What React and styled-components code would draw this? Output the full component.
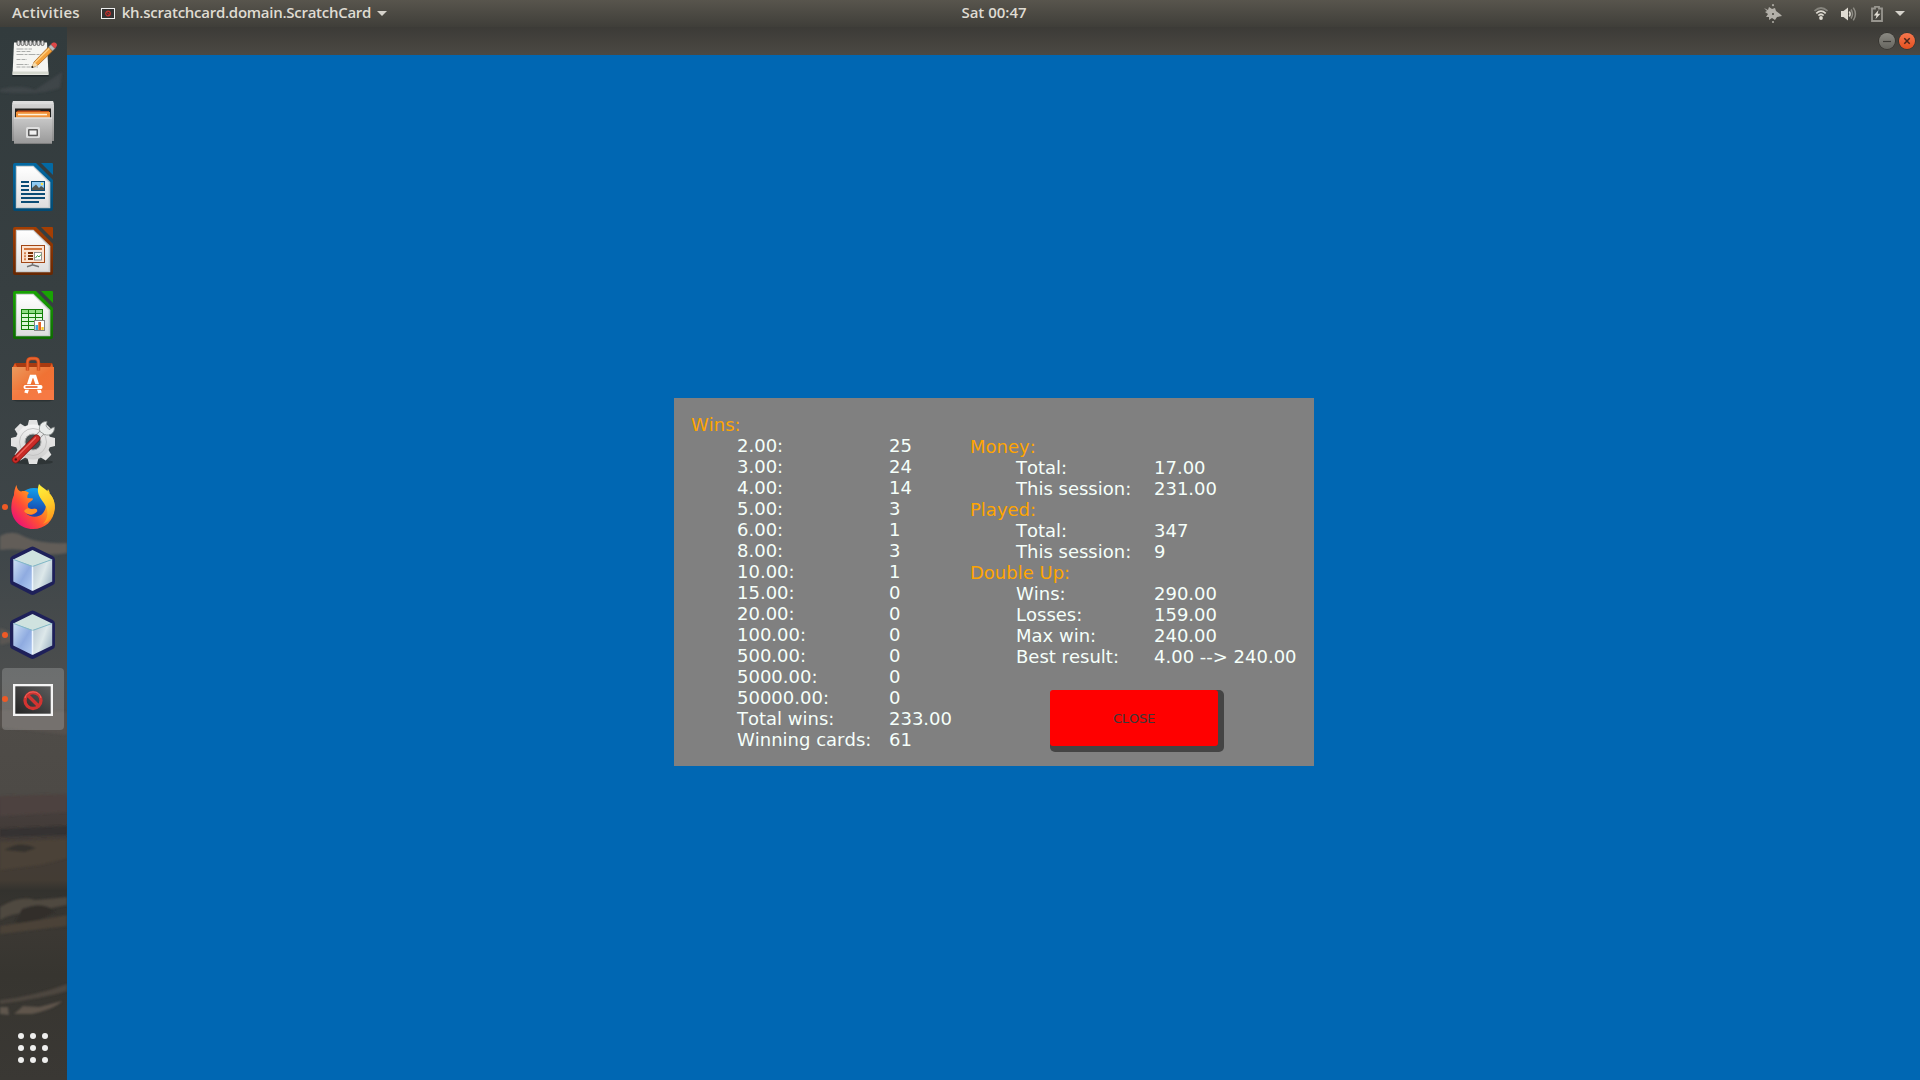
import React from "react";
import styled, { createGlobalStyle, css } from "styled-components";

const GlobalStyle = createGlobalStyle`
  * { box-sizing: border-box; }
  body { margin: 0; overflow: hidden; background: #0067b3; }
`;

const Desktop = styled.div`
  width: 1920px;
  height: 1080px;
  display: flex;
  flex-direction: column;
  font-family: "DejaVu Sans", sans-serif;
`;

/* ---------- top bar ---------- */

const TopBar = styled.header`
  height: 27px;
  flex: none;
  display: grid;
  grid-template-columns: 1fr auto 1fr;
  align-items: center;
  background: linear-gradient(#58554d, #3f3e39);
  color: #dfdbd2;
  font: 600 15px/25px "Open Sans", "Noto Sans", sans-serif;
`;

const BarStart = styled.div`
  display: flex;
  align-items: center;
  padding-left: 12px;
`;

const BarText = styled.span`
  white-space: nowrap;
  padding-bottom: 2px;
  letter-spacing: ${(p) => p.$spacing || "0"};
  margin-left: ${(p) => p.$left || "0"};
`;

const AppIcon = styled.svg`
  margin-left: ${(p) => p.$left || "0"};
  display: block;
`;

const Caret = styled.i`
  border: 5px solid transparent;
  border-top-color: #d6d3cc;
  border-bottom: 0;
  margin-left: ${(p) => p.$left};
`;

const BarEnd = styled.div`
  display: flex;
  align-items: center;
  justify-content: flex-end;
  padding-right: 15px;
`;

/* ---------- body ---------- */

const Body = styled.div`
  flex: 1;
  min-height: 0;
  display: flex;
`;

const Dock = styled.nav`
  position: relative;
  width: 67px;
  flex: none;
  display: flex;
  flex-direction: column;
  justify-content: space-between;
  padding: 1px 3px 13px 2px;
  background: #373e40;
`;

const Wallpaper = styled.svg`
  position: absolute;
  inset: 0;
`;

const DockItems = styled.div`
  position: relative;
  display: flex;
  flex-direction: column;
  gap: 2px;
`;

const DockItem = styled.div`
  position: relative;
  width: 62px;
  height: 62px;
  display: flex;
  align-items: center;
  justify-content: center;
  border-radius: 4px;
  background: ${(p) => (p.$active ? "rgba(255,255,255,0.19)" : "none")};
  ${(p) =>
    p.$running &&
    css`
      &::before {
        content: "";
        position: absolute;
        left: 0;
        top: 28px;
        width: 6px;
        height: 6px;
        border-radius: 50%;
        background: #ee5a26;
      }
    `}
`;

const AppGrid = styled.div`
  position: relative;
  align-self: center;
  display: grid;
  grid-template-columns: repeat(3, 6px);
  gap: 6px;
  margin-bottom: 4px;
`;

const GridDot = styled.span`
  width: 6px;
  height: 6px;
  border-radius: 50%;
  background: #efefee;
`;

const Window = styled.section`
  flex: 1;
  display: flex;
  flex-direction: column;
`;

const TitleBar = styled.div`
  height: 28px;
  flex: none;
  display: flex;
  justify-content: flex-end;
  align-items: center;
  gap: 4px;
  padding-right: 5px;
  background: linear-gradient(#3c3b37, #4b4943);
`;

const WindowButton = styled.span`
  width: 16px;
  height: 16px;
  border-radius: 50%;
  display: flex;
  align-items: center;
  justify-content: center;
  box-shadow: 0 0 0 0.6px #2d2c28;
  background: ${(p) =>
    p.$close ? "linear-gradient(#f6774e, #e4501f)" : "linear-gradient(#8b8a83, #66655f)"};
`;

const Canvas = styled.main`
  flex: 1;
  display: flex;
  align-items: flex-start;
  justify-content: center;
  padding-top: 343px;
  background: #0067b3;
`;

/* ---------- statistics dialog ---------- */

const Panel = styled.div`
  width: 640px;
  height: 368px;
  display: flex;
  padding: 16px 0 0 17px;
  margin-left: 1px;
  background: #808080;
  color: #f5fffa;
  font: 18px/21px "DejaVu Sans", sans-serif;
  font-kerning: none;
`;

const WinsColumn = styled.div`
  width: 279px;
`;

const DetailsColumn = styled.div`
  padding-top: 22px;
  display: flex;
  flex-direction: column;
`;

const Heading = styled.div`
  color: #ffa500;
`;

const Row = styled.div`
  display: grid;
  grid-template-columns: ${(p) => p.$label}px auto;
  padding-left: 46px;
  white-space: nowrap;
`;

const ButtonBase = styled.div`
  width: 174px;
  height: 62px;
  margin: 23px 0 0 80px;
  padding: 0 6px 6px 0;
  border-radius: 5px;
  background: #444;
`;

const CloseButton = styled.button`
  width: 168px;
  height: 56px;
  display: block;
  padding: 1px 0 0;
  border: 0;
  border-radius: 3px;
  background: #ff0000;
  color: #3a3a3a;
  font: 13px/16px "DejaVu Sans", sans-serif;
  font-kerning: none;
  letter-spacing: -0.2px;
`;

const wins = [
  ["2.00:", "25"], ["3.00:", "24"], ["4.00:", "14"], ["5.00:", "3"], ["6.00:", "1"],
  ["8.00:", "3"], ["10.00:", "1"], ["15.00:", "0"], ["20.00:", "0"], ["100.00:", "0"],
  ["500.00:", "0"], ["5000.00:", "0"], ["50000.00:", "0"], ["Total wins:", "233.00"],
  ["Winning cards:", "61"],
];

const details = [
  { title: "Money:", rows: [["Total:", "17.00"], ["This session:", "231.00"]] },
  { title: "Played:", rows: [["Total:", "347"], ["This session:", "9"]] },
  {
    title: "Double Up:",
    rows: [["Wins:", "290.00"], ["Losses:", "159.00"], ["Max win:", "240.00"], ["Best result:", "4.00 --> 240.00"]],
  },
];

/* ---------- icons ---------- */

const Icon = ({ children }) => (
  <svg width="48" height="48" viewBox="0 0 48 48" overflow="visible">{children}</svg>
);

const NotesIcon = () => (
  <Icon>
    <path d="M3 41.500L40 41.500L39 39H4Z" fill="#20272a" />
    <path d="M5 7.500H38L39.500 40H3.500Z" fill="#f5f5f2" />
    <path d="M3.700 36.500H39.300L39.500 39.500H3.500Z" fill="#d5d8cf" />
    {[0, 1, 2, 3, 4, 5, 6].map((i) => (
      <rect key={i} x={8 + i * 4} y="5.500" width="3" height="5" rx="1.400" fill="#ddd" stroke="#555" strokeWidth="0.900" />
    ))}
    {[14, 16.500, 19.500, 24.500, 29.500, 32].map((y, i) => (
      <path key={y} d={`M7.500 ${y}H${[23, 22, 32, 18, 20, 29][i]}`} stroke="#a3a5a3" strokeWidth="0.900" strokeDasharray={i % 2 ? "4 1" : "7 1 3 1"} />
    ))}
    <path d="M23 32.500L25 27L39.500 12L43.500 16L29 30Z" fill="#f5a13a" stroke="#9c5a17" strokeWidth="0.700" />
    <path d="M26 27.500L40.500 13.200" stroke="#ffcf80" strokeWidth="1.300" />
    <path d="M25 27L28.800 30.200L22.700 32.700Z" fill="#f5dcae" />
    <circle cx="23.400" cy="32" r="1" fill="#222" />
    <path d="M39.500 12L42 9.500L46 13.500L43.500 16Z" fill="#b9bcbc" stroke="#777" strokeWidth="0.500" />
    <path d="M42 9.500C43.500 6 49 7.500 47.800 11L46 13.500Z" fill="#dd4747" />
  </Icon>
);

const FilesIcon = () => (
  <Icon>
    <defs>
      <linearGradient id="cab" x2="0" y2="1"><stop stopColor="#c8c8c8" /><stop offset="1" stopColor="#989898" /></linearGradient>
      <linearGradient id="cabBack" x2="0" y2="1"><stop stopColor="#d9d9d9" /><stop offset="1" stopColor="#8b8b8b" /></linearGradient>
    </defs>
    <path d="M4 2H44L45 6V42H3V6Z" fill="url(#cabBack)" />
    <path d="M4 2H44L44.700 5H3.300Z" fill="#ddd" />
    <rect x="6" y="9.500" width="36" height="11" fill="#22211f" />
    <path d="M7 13L9 11.500H31L32 12H40V19H7Z" fill="#c4501a" />
    <rect x="7" y="13" width="34" height="7" fill="#f09139" />
    <rect x="9" y="14.800" width="29" height="1.500" fill="#fff0d8" />
    <rect x="5" y="18.500" width="38" height="26.500" fill="url(#cab)" />
    <path d="M5 19H43" stroke="#ededed" strokeWidth="1" />
    <path d="M5 44.500H43" stroke="#7d7d7d" strokeWidth="1" />
    <rect x="17" y="28" width="14" height="11" rx="1.500" fill="#dedede" />
    <rect x="19" y="30" width="10" height="7.200" rx="1" fill="#5c5c5c" />
    <rect x="20.500" y="31.500" width="7" height="4.200" fill="#f1f1f1" />
  </Icon>
);

const OfficePage = ({ id, top, bottom, children }) => (
  <Icon>
    <defs>
      <linearGradient id={id} x2="0" y2="1"><stop stopColor={top} /><stop offset="1" stopColor={bottom} /></linearGradient>
      <linearGradient id={id + "p"} x2="0" y2="1"><stop stopColor="#fff" /><stop offset="1" stopColor="#dedede" /></linearGradient>
    </defs>
    <path d="M6 0H27L44 17V46Q44 48 42 48H6Q4 48 4 46V2Q4 0 6 0Z" fill={`url(#${id})`} />
    <path d="M32 0H43Q44 0 44 1V12Z" fill={top} />
    <path d="M6.800 2.700H24.500L41.300 19V45.300H6.800Z" fill="#c9cdcf" />
    <path d="M8 3.700H24L39.600 19.500V44H8Z" fill={`url(#${id}p)`} />
    {children}
  </Icon>
);

const WriterIcon = () => (
  <OfficePage id="wr" top="#0369a3" bottom="#024a73">
    <path d="M12 19H20M12 23H20M12 27H20M12 31H36M12 35H36M12 39H30" stroke="#0a4c75" strokeWidth="2" />
    <rect x="22.500" y="18.500" width="13" height="9" fill="#8fcbf2" stroke="#0a4c75" />
    <path d="M23 27V25L27 21.500L30 25L32 23L35 25V27Z" fill="#53564f" />
    <circle cx="33" cy="21" r="1.200" fill="#ffe04a" />
  </OfficePage>
);

const ImpressIcon = () => (
  <OfficePage id="im" top="#a33e03" bottom="#662702">
    <rect x="12.500" y="18.500" width="23" height="17" fill="#fbe3d1" stroke="#a24716" />
    <rect x="15" y="21" width="18" height="2" fill="#d3763d" />
    <path d="M15 26.200H17M15 29.200H17M15 32.200H17" stroke="#d88350" strokeWidth="2" />
    <path d="M19 26H24M19 29H24M19 32H24" stroke="#7a2e04" strokeWidth="2" />
    <rect x="25.500" y="25.500" width="7" height="7.500" fill="#fff" stroke="#888" strokeWidth="0.900" />
    <path d="M26.500 31L28.500 28.500L30 30L32 27.500" stroke="#3c9d3c" fill="none" />
    <path d="M23.500 36V38L18 39.800M24 38L30 39.800" stroke="#737373" strokeWidth="1.500" fill="none" />
  </OfficePage>
);

const CalcIcon = () => (
  <OfficePage id="ca" top="#18a303" bottom="#0e6a02">
    <rect x="12" y="18" width="22" height="21" fill="#127f08" />
    {[0, 1, 2, 3, 4].map((r) =>
      [0, 1, 2].map((c) => (
        <rect key={`${r}${c}`} x={13 + c * 7} y={19 + r * 4} width="6" height="3" fill={r ? "#dcf8d7" : "#8fdd84"} />
      ))
    )}
    <rect x="25.500" y="29.500" width="10" height="10" fill="#fff" stroke="#858585" />
    <rect x="26.500" y="34" width="2.500" height="5" fill="#35a8e0" />
    <rect x="29.300" y="31" width="2.700" height="8" fill="#e5652a" />
    <rect x="32.400" y="36" width="2.300" height="3" fill="#f5c82b" />
  </OfficePage>
);

const SoftwareIcon = () => (
  <Icon>
    <defs>
      <linearGradient id="bag" x1="0" x2="1" y2="1"><stop stopColor="#eb9a5e" /><stop offset="0.500" stopColor="#f07234" /><stop offset="1" stopColor="#f5703a" /></linearGradient>
    </defs>
    <path d="M3 45H45L40 46.500H8Z" fill="#22282a" opacity="0.600" />
    <path d="M6 8H43L44 12H4Z" fill="#a93a10" />
    <path d="M4 12L6 8L8 12M41 12L43 8L44 12" fill="#e45a22" />
    <rect x="3" y="12" width="42" height="33" fill="url(#bag)" />
    <rect x="3" y="35" width="42" height="10" fill="#ff9368" opacity="0.250" />
    <path d="M18.500 15.500V8Q18.500 3.500 22 3.500H26Q29.500 3.500 29.500 8V15.500" fill="none" stroke="#c54a18" strokeWidth="3.400" />
    <path d="M18.500 15.500V8Q18.500 3.500 22 3.500H26Q29.500 3.500 29.500 8V15.500" fill="none" stroke="#ea6430" strokeWidth="1.800" />
    <path d="M17 38L22.300 21.500H25.700L31 38" fill="none" stroke="#fff" strokeWidth="3.600" />
    <rect x="13.500" y="29.200" width="21" height="5.600" fill="#f07436" />
    <rect x="14.600" y="30" width="18.800" height="4" rx="1.500" fill="#fff" />
    <path d="M16.500 32H28.500" stroke="#e85b24" strokeWidth="1.600" />
  </Icon>
);

const SettingsIcon = () => (
  <Icon>
    <defs>
      <linearGradient id="gear" x2="0" y2="1"><stop stopColor="#f4f4f4" /><stop offset="1" stopColor="#cfcfcf" /></linearGradient>
    </defs>
    <ellipse cx="25" cy="43" rx="19" ry="2.500" fill="#1f2526" opacity="0.500" />
    {[0, 45, 90, 135, 180, 225, 270, 315].map((a) => (
      <path key={a} d="M18.500 7L20 1H28L29.500 7Z" transform={`rotate(${a} 24 23)`} fill="#e2e2e2" />
    ))}
    <circle cx="24" cy="23" r="17.500" fill="url(#gear)" />
    <circle cx="24" cy="23" r="13.500" fill="none" stroke="#c4c4c4" />
    <circle cx="24" cy="23" r="8" fill="#454d4f" stroke="#aaa" />
    <path d="M28 18.500L36 10.500" stroke="#8a8a8a" strokeWidth="5.600" />
    <path d="M28 18.500L36 10.500" stroke="#e9e9e9" strokeWidth="4.200" />
    <path d="M31 12.500C29 7.500 32 2 38 2.500L37 7L40 10.500L45.300 8C46 14 41 17.500 35.500 15.500Z" fill="#e9eceb" stroke="#878b8a" strokeWidth="0.800" />
    <path d="M6.700 40.500L27.500 19.500" stroke="#801513" strokeWidth="7.400" strokeLinecap="round" />
    <path d="M6.700 40.500L27.500 19.500" stroke="#c92b27" strokeWidth="6" strokeLinecap="round" />
    <path d="M8 37.500L26.500 18.700" stroke="#ed675e" strokeWidth="1.300" strokeLinecap="round" />
    <circle cx="6.800" cy="40.400" r="1.200" fill="#501210" />
  </Icon>
);

const FirefoxIcon = () => (
  <Icon>
    <defs>
      <linearGradient id="fx" x1="0.900" y1="0.100" x2="0.100" y2="0.850"><stop stopColor="#ffe226" /><stop offset="0.350" stopColor="#ff9a1e" /><stop offset="0.650" stopColor="#ff4f35" /><stop offset="1" stopColor="#ed1274" /></linearGradient>
      <linearGradient id="fxy" x2="0.200" y2="1"><stop stopColor="#fff23d" /><stop offset="0.600" stopColor="#ffc928" /><stop offset="1" stopColor="#ff9a1e" /></linearGradient>
      <linearGradient id="fxb" x1="0.600" x2="0.500" y2="1"><stop stopColor="#12a2ee" /><stop offset="0.700" stopColor="#1847ae" /></linearGradient>
    </defs>
    <circle cx="25" cy="22" r="17" fill="url(#fxb)" />
    <path d="M5 12C5 7 7 3 7.500 2C8 6 9.500 8 12 8.500C15 7.500 18 8 20 10C18.500 11 18 13 18.500 15L24 15.500C24 18 19.500 19 19 21C18 24 20 26.500 23 26C28 25 27.500 27.500 28.500 28C25 33 20 32 17 30C21 35 30 35 34 30C38 25 38 18 34 13L36 8C43 11 46 18 45.800 25C45 38 36 46 24 46C11 46 2 36 2.300 24C2.500 18 4 14 5 12Z" fill="url(#fx)" />
    <path d="M30 1C33 5 42 8 45 18C48 29 42 38 34 41C39 36 40 28 36 22C34 17 26 12 30 1Z" fill="url(#fxy)" />
    <path d="M39 6L41 10L38 9Z" fill="#ffd52d" />
    <path d="M17 26C20 24 22 27 25 26C27 25 29 27 28 28C24 33 18 32 15 28Z" fill="#ff9424" />
  </Icon>
);

const CubeIcon = ({ id }) => (
  <Icon>
    <defs>
      <linearGradient id={id + "l"} x2="1" y2="1"><stop stopColor="#cfe2f6" /><stop offset="0.550" stopColor="#8fabe0" /><stop offset="1" stopColor="#b4cdf2" /></linearGradient>
      <linearGradient id={id + "r"} x2="1" y2="0.600"><stop stopColor="#b4c4d0" /><stop offset="0.600" stopColor="#dde8ea" /><stop offset="1" stopColor="#a8bcc9" /></linearGradient>
    </defs>
    <path d="M23.500 3.500L42 12.500V34.500L23.500 44L5 34.500V12.500Z" fill="#1e2059" stroke="#1e2059" strokeWidth="8" strokeLinejoin="round" />
    <path d="M23.500 3L43 12.500L23.500 19.500L4.300 12.500Z" fill="#cfe2df" />
    <path d="M4.300 12L23.500 19V44L4.300 34.500Z" fill={`url(#${id}l)`} />
    <path d="M43.200 12L23.500 19V44L43.200 34.500Z" fill={`url(#${id}r)`} />
    <path d="M4.600 12.500L23.500 19.500L43 12.500" stroke="#81b9c6" strokeWidth="1" fill="none" />
    <path d="M23.500 19.500V43.500" stroke="#eef6ff" strokeWidth="1.500" />
  </Icon>
);

const NoEntryIcon = () => (
  <Icon>
    <defs>
      <linearGradient id="scr" x1="0" y1="1" x2="1" y2="0"><stop stopColor="#242424" /><stop offset="1" stopColor="#5c5c5c" /></linearGradient>
    </defs>
    <rect x="4" y="9" width="40" height="32" fill="#f4f4f4" />
    <rect x="6.300" y="11.300" width="35.400" height="27.400" fill="url(#scr)" />
    <circle cx="24" cy="25.500" r="8" fill="none" stroke="#d23431" strokeWidth="3.300" />
    <path d="M18.500 20L29.500 31" stroke="#d23431" strokeWidth="3.300" />
    <path d="M16 23A8.300 8.300 0 0 1 32 23" fill="none" stroke="#ee6b62" strokeWidth="1" />
  </Icon>
);

const dockApps = [
  { icon: <NotesIcon /> },
  { icon: <FilesIcon /> },
  { icon: <WriterIcon /> },
  { icon: <ImpressIcon /> },
  { icon: <CalcIcon /> },
  { icon: <SoftwareIcon /> },
  { icon: <SettingsIcon /> },
  { icon: <FirefoxIcon />, running: true },
  { icon: <CubeIcon id="c1" /> },
  { icon: <CubeIcon id="c2" />, running: true },
  { icon: <NoEntryIcon />, running: true, active: true },
];

const DockWallpaper = () => (
  <Wallpaper width="67" height="1053" viewBox="0 27 67 1053">
    <defs>
      <linearGradient id="wall" x2="0" y2="1">
        <stop stopColor="#323b3d" />
        <stop offset="0.250" stopColor="#373f41" />
        <stop offset="0.500" stopColor="#3f4649" />
        <stop offset="0.620" stopColor="#4c4e4e" />
        <stop offset="0.650" stopColor="#4f4c48" />
        <stop offset="0.730" stopColor="#4d4a46" />
        <stop offset="0.735" stopColor="#48403e" />
        <stop offset="0.760" stopColor="#433c39" />
        <stop offset="0.810" stopColor="#433c34" />
        <stop offset="0.820" stopColor="#33322e" />
        <stop offset="0.860" stopColor="#3b3833" />
        <stop offset="0.900" stopColor="#373530" />
        <stop offset="1" stopColor="#3a3834" />
      </linearGradient>
      <filter id="soft"><feGaussianBlur stdDeviation="1.300" /></filter>
    </defs>
    <rect y="27" width="67" height="1053" fill="url(#wall)" />
    <g filter="url(#soft)">
      <path d="M0 89Q20 84 35 90Q50 80 62 72L60 88Q40 96 0 92Z" fill="#4c5053" opacity="0.500" />
      <path d="M0 536Q12 529 25 537Q40 544 67 543V553Q45 557 30 551Q15 548 0 550Z" fill="#625d59" />
      <path d="M0 628Q14 632 20 640L0 645Z" fill="#5a5753" />
      <path d="M0 710L67 712V735L0 727Z" fill="#56514d" />
      <path d="M0 796L67 794V812L0 816Z" fill="#4d4340" />
      <path d="M0 829L67 826V835L0 837Z" fill="#343331" />
      <path d="M0 842L67 839V858L40 865L0 870Z" fill="#4b4237" />
      <path d="M4 850Q20 840 36 848L25 852Z" fill="#35322e" />
      <path d="M0 907Q20 895 35 900Q48 899 67 897V905L26 913Q12 913 0 920Z" fill="#504841" />
      <path d="M22 909Q44 900 55 912L35 922L15 923Z" fill="#302f2b" />
      <path d="M0 926Q35 921 67 915V926L0 934Z" fill="#4b4239" />
      <path d="M0 1000Q35 996 67 984V991Q45 998 0 1004Z" fill="#4e463f" />
      <path d="M0 1007H8L9 1015L0 1014Z" fill="#5f564e" />
      <path d="M14 1014L23 1006L39 1007L62 1001Q55 1009 32 1014Z" fill="#5e544b" />
    </g>
  </Wallpaper>
);

const StatusIcons = () => (
  <>
    <svg width="18" height="20" viewBox="0 0 18 20">
      <path d="M0 4L4 6L5 3L8 5L11 4L12 7L16 10L18 12L13 13L11 16L8 14L5 16L5 13L2 13L4 10L1 8L3 7Z" fill="#b3b0a9" />
      <circle cx="9" cy="10" r="1" fill="#45433e" />
      <circle cx="9" cy="1.200" r="1.100" fill="#aaa7a0" />
      <circle cx="9" cy="18" r="1.100" fill="#aaa7a0" />
    </svg>
    <AppIcon $left="32px" width="14" height="13" viewBox="0 0 14 13">
      <path d="M0.500 4Q7 -2 13.500 4" stroke="#86847d" strokeWidth="1.700" fill="none" />
      <path d="M2.300 6.300Q7 2 11.700 6.300M4.300 8.500Q7 6 9.700 8.500" stroke="#dfdbd2" strokeWidth="1.700" fill="none" />
      <circle cx="7" cy="11" r="1.900" fill="#dfdbd2" />
    </AppIcon>
    <AppIcon $left="13px" width="16" height="14" viewBox="0 0 16 14">
      <path d="M0 4H2.500L7 0.500V13.500L2.500 10H0Z" fill="#dfdbd2" />
      <path d="M8.300 4.500Q10 7 8.300 9.500" stroke="#dfdbd2" strokeWidth="1.500" fill="none" />
      <path d="M10 2.500Q13 7 10 11.500M12.300 0.700Q16.500 7 12.300 13.300" stroke="#8e8c85" strokeWidth="1.500" fill="none" />
    </AppIcon>
    <AppIcon $left="14px" width="12" height="16" viewBox="0 0 12 16">
      <path d="M4 0.900H8V2.500H11V15H1V2.500H4Z" stroke="#98968f" strokeWidth="1.800" fill="none" />
      <path d="M7.500 4L2.700 9.500H5.500L4.500 13.200L9.400 7.700H6.600Z" fill="#dfdbd2" />
    </AppIcon>
    <Caret $left="12px" />
  </>
);

export default function App() {
  return (
    <Desktop>
      <GlobalStyle />
      <TopBar>
        <BarStart>
          <BarText $spacing="0.200px">Activities</BarText>
          <AppIcon $left="21px" width="14" height="11" viewBox="0 0 14 11">
            <rect x="0.500" y="0.500" width="13" height="10" fill="#333" stroke="#eee" />
            <circle cx="7" cy="5.500" r="2.300" stroke="#c9302d" strokeWidth="1.200" fill="none" />
            <path d="M5.500 4L8.500 7" stroke="#c9302d" />
          </AppIcon>
          <BarText $left="7px" $spacing="-0.270px">kh.scratchcard.domain.ScratchCard</BarText>
          <Caret $left="6px" />
        </BarStart>
        <BarText $left="68px">Sat 00:47</BarText>
        <BarEnd>
          <StatusIcons />
        </BarEnd>
      </TopBar>
      <Body>
        <Dock>
          <DockWallpaper />
          <DockItems>
            {dockApps.map((app, i) => (
              <DockItem key={i} $running={app.running} $active={app.active}>
                {app.icon}
              </DockItem>
            ))}
          </DockItems>
          <AppGrid>
            {Array.from({ length: 9 }, (_, i) => (
              <GridDot key={i} />
            ))}
          </AppGrid>
        </Dock>
        <Window>
          <TitleBar>
            <WindowButton>
              <svg width="10" height="10"><path d="M1 5.500H9" stroke="#3c3b37" strokeWidth="1.200" /></svg>
            </WindowButton>
            <WindowButton $close>
              <svg width="10" height="10"><path d="M2.300 2.300L7.700 7.700M7.700 2.300L2.300 7.700" stroke="#4a261a" strokeWidth="1.500" /></svg>
            </WindowButton>
          </TitleBar>
          <Canvas>
            <Panel>
              <WinsColumn>
                <Heading>Wins:</Heading>
                {wins.map(([label, value]) => (
                  <Row key={label} $label={152}>
                    <span>{label}</span>
                    <span>{value}</span>
                  </Row>
                ))}
              </WinsColumn>
              <DetailsColumn>
                {details.map((group) => (
                  <React.Fragment key={group.title}>
                    <Heading>{group.title}</Heading>
                    {group.rows.map(([label, value]) => (
                      <Row key={label} $label={138}>
                        <span>{label}</span>
                        <span>{value}</span>
                      </Row>
                    ))}
                  </React.Fragment>
                ))}
                <ButtonBase>
                  <CloseButton>CLOSE</CloseButton>
                </ButtonBase>
              </DetailsColumn>
            </Panel>
          </Canvas>
        </Window>
      </Body>
    </Desktop>
  );
}
